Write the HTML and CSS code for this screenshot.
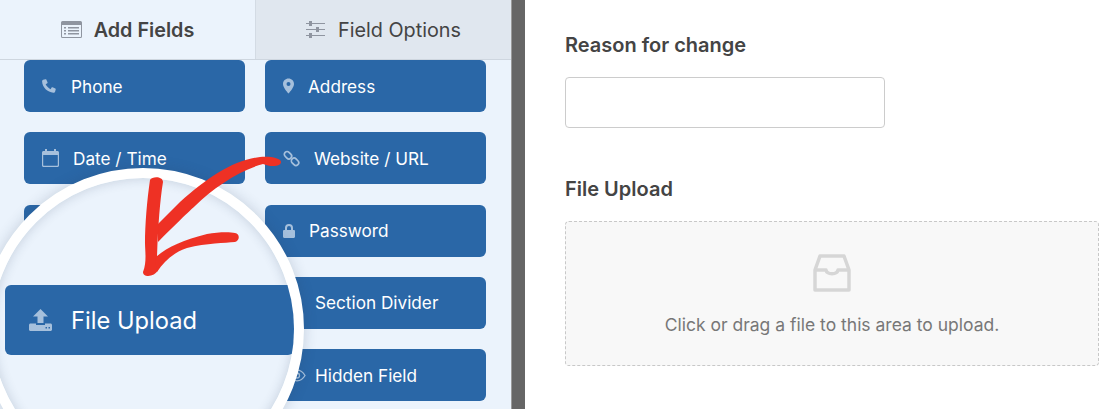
FILE: index.html
```html
<!DOCTYPE html>
<html lang="en">
<head>
    <meta charset="UTF-8">
    <meta name="viewport" content="width=device-width, initial-scale=1.0">
    <title>Form Builder</title>
    <link rel="stylesheet" href="styles.css">
</head>
<body>

    <div class="page">
        <div class="builder">
            <div class="tabs">
                <div class="tab tab-active">
                    <svg class="tab-icon" width="21" height="17" viewBox="0 0 21 17"><path fill="#8f95a0" fill-rule="evenodd" d="M1.500 0h18A1.500 1.500 0 0 1 21 1.500v14a1.500 1.500 0 0 1-1.500 1.500h-18A1.500 1.500 0 0 1 0 15.500v-14A1.500 1.500 0 0 1 1.500 0zM1 4v11.500c0 .3.200.5.500.5h18c.3 0 .5-.2.500-.5V4zM3 6h2v1.500H3zm4 0h11v1.500H7zM3 9h2v1.500H3zm4 0h11v1.500H7zm-4 3h2v1.500H3zm4 0h11v1.500H7z"/></svg>
                    <span>Add Fields</span>
                </div>
                <div class="tab">
                    <svg class="tab-icon" width="19" height="17" viewBox="0 0 19 17"><path fill="#8f95a0" d="M0 2h3V0h3v2h13v1H6v2H3V3H0zm0 6h10V6h3v2h6v1h-6v2h-3V9H0zm0 6h3v-2h3v2h13v1H6v2H3v-2H0z"/></svg>
                    <span>Field Options</span>
                </div>
            </div>

            <!-- field buttons -->
            <div class="field-grid">
                <div class="field-btn">
                    <svg class="field-icon icon-phone" width="14" height="14" viewBox="0 0 15 15"><path d="M3.600.2 1.300.9C.5 1.200 0 1.900.1 2.800c.4 6.200 5.800 11.600 12 12 .9.100 1.600-.4 1.900-1.200l.7-2.300c.1-.4 0-.8-.4-1l-3-1.400c-.4-.2-.8-.1-1 .2L9.200 11C7 9.900 5 7.900 3.900 5.700l1.800-1.100c.3-.2.400-.6.200-1L4.600.6C4.400.2 4 .1 3.600.2z"/></svg>
                    <span>Phone</span>
                </div>
                <div class="field-btn">
                    <svg class="field-icon icon-pin" width="11" height="16" viewBox="0 0 11 15"><path fill-rule="evenodd" d="M5.500 0C2.500 0 0 2.400 0 5.400 0 8.500 3.600 12.800 5.500 15c1.900-2.200 5.500-6.500 5.500-9.600C11 2.400 8.500 0 5.500 0zm0 3.500a2 2 0 1 1 0 4 2 2 0 0 1 0-4z"/></svg>
                    <span>Address</span>
                </div>
                <div class="field-btn">
                    <svg class="field-icon icon-cal" width="17" height="18" viewBox="0 0 17 18"><path fill-rule="evenodd" d="M3 0h2v2h7V0h2v2h1.500C16.300 2 17 2.700 17 3.500v13c0 .8-.7 1.500-1.500 1.500h-14C.7 18 0 17.300 0 16.500v-13C0 2.700.7 2 1.500 2H3zM1.200 6v10.300c0 .3.200.5.500.5h13.600c.3 0 .5-.2.500-.5V6z"/></svg>
                    <span>Date / Time</span>
                </div>
                <div class="field-btn">
                    <svg class="field-icon icon-link" width="17" height="17" viewBox="0 0 17 17"><g fill="none" stroke="#a6c0dc" stroke-width="1.700"><rect x="1" y="2.500" width="8" height="5.500" rx="2.700" transform="rotate(45 5 5.200)"/><rect x="8" y="9" width="8" height="5.500" rx="2.700" transform="rotate(45 12 11.800)"/></g></svg>
                    <span>Website / URL</span>
                </div>
                <div class="field-btn"></div>
                <div class="field-btn">
                    <svg class="field-icon icon-lock" width="12" height="14" viewBox="0 0 12 14"><path fill-rule="evenodd" d="M2 6V4a4 4 0 0 1 8 0v2h.8c.7 0 1.200.5 1.200 1.200v5.600c0 .7-.5 1.200-1.200 1.200H1.200C.5 14 0 13.500 0 12.800V7.200C0 6.500.5 6 1.200 6zm2 0h4V4a2 2 0 0 0-4 0z"/></svg>
                    <span>Password</span>
                </div>
                <div class="field-btn"></div>
                <div class="field-btn field-btn-wide">
                    <span>Section Divider</span>
                </div>
                <div class="field-btn"></div>
                <div class="field-btn field-btn-wide">
                    <svg class="field-icon icon-eye" width="18" height="13" viewBox="0 0 18 13"><path fill="none" stroke="#a6c0dc" stroke-width="1.300" d="M1 6.500C3 3 6 1.200 9 1.200s6 1.800 8 5.300c-2 3.500-5 5.300-8 5.300S3 10 1 6.500z"/><circle cx="9" cy="6.500" r="2.500" fill="none" stroke="#a6c0dc" stroke-width="1.300"/></svg>
                    <span>Hidden Field</span>
                </div>
            </div>

            <!-- magnified button -->
            <div class="lens">
                <div class="lens-btn">
                    <svg class="lens-icon" width="23" height="22" viewBox="0 0 23 22"><path fill="#a6c0dc" fill-rule="evenodd" d="M11.500 0 19 7.500h-4.500V14h-6V7.500H4zM1.500 14.500H7v1.500h9v-1.500h5.500c.8 0 1.500.7 1.500 1.500v4.500c0 .8-.7 1.500-1.500 1.500h-20C.7 22 0 21.300 0 20.500V16c0-.8.700-1.500 1.500-1.500zM16.500 18v1.500H18V18zm3 0v1.500H21V18z"/></svg>
                    <span>File Upload</span>
                </div>
            </div>

            <svg class="arrow" width="150" height="130" viewBox="140 152 150 130">
                <path fill="#ee3124" d="M281 162C281 158 270 156 260 157C233 160 207 178 180 202L158 224L158 242C170 230 187 213 195 206C213 188 240 170 263 164C270 167 281 167 281 162Z"/>
                <path fill="#ee3124" d="M150 180C152 176 163 176 163 182C160 200 158 227 157 257L158 270C155 277 143 278 143 272C147 262 145 250 145 243C145 225 147 200 150 180Z"/>
                <path fill="#ee3124" d="M155 258C165 248 183 240 207 234C218 232 230 232 235 233C240 234 240 240 235 242C225 243 207 243 187 248C175 252 165 260 157 272Z"/>
            </svg>
        </div>

        <div class="divider"></div>

        <div class="preview">
            <label class="field-label label-reason">Reason for change</label>
            <input class="text-input" type="text">
            <label class="field-label label-upload">File Upload</label>
            <div class="dropzone">
                <svg class="inbox" width="38" height="38" viewBox="0 0 38 38"><g fill="none" stroke="#d6d6d6" stroke-width="3.500" stroke-linejoin="round"><path d="M2 16 7 2h24l5 14v20H2z"/><path d="M2 16h11c1 5 11 5 12 0h11"/></g></svg>
                <p class="dropzone-text">Click or drag a file to this area to upload.</p>
            </div>
        </div>
    </div>

</body>
</html>
```

FILE: styles.css
```css
html, body {
    margin: 0;
    height: 100%;
    overflow: hidden;
}

body {
    font-family: 'Inter', 'Liberation Sans', sans-serif;
    background: white;
}

.page {
    display: flex;
    height: 409px;
}

.builder {
    position: relative;
    width: 511px;
    height: 409px;
    background: #ebf3fc;
    overflow: hidden;
    flex-shrink: 0;
}

.divider {
    width: 13px;
    background: #666666;
    border-left: 1px solid #9a9a9a;
    flex-shrink: 0;
}

.tabs {
    display: flex;
    height: 60px;
    box-sizing: border-box;
    border-bottom: 1px solid #ced6df;
}

.tab {
    flex: 1;
    display: flex;
    align-items: center;
    justify-content: center;
    gap: 13px;
    font-size: 19.800px;
    color: #444;
    background: #e0e7ef;
    border-left: 1px solid #d3dbe4;
}

.tab-active {
    flex: 0 0 255px;
    gap: 12px;
    font-weight: 600;
    background: #ebf3fc;
    border-left: none;
}

.field-grid {
    display: grid;
    grid-template-columns: 221px 221px;
    grid-auto-rows: 52px;
    column-gap: 20px;
    row-gap: 20.250px;
    padding-left: 24px;
}

.field-btn {
    display: flex;
    align-items: center;
    padding-left: 18px;
    border-radius: 6px;
    background: #2a67a7;
    color: white;
    font-size: 17.200px;
}

.field-btn-wide {
    padding-left: 50px;
}

.field-icon {
    fill: #a6c0dc;
    flex-shrink: 0;
}

.icon-phone { margin-right: 15px; }
.icon-pin { margin-right: 14px; }
.icon-cal { margin-right: 14px; }
.icon-link { margin-right: 14px; }
.icon-lock { margin-right: 14px; }

.icon-eye {
    margin-left: -27px;
    margin-right: 9px;
}

.lens {
    position: absolute;
    left: -18px;
    top: 168px;
    width: 302px;
    height: 302px;
    border: 10px solid white;
    border-radius: 50%;
    background: #ebf3fc;
    box-shadow: inset 0 0 12px rgba(40, 60, 90, 0.2), 0 0 14px rgba(40, 60, 90, 0.2);
    overflow: hidden;
    z-index: 1;
}

.lens-btn {
    display: flex;
    align-items: center;
    height: 70px;
    margin-top: 107px;
    margin-left: 13px;
    padding-left: 24px;
    border-radius: 6px;
    background: #2a67a7;
    color: white;
    font-size: 23.700px;
}

.lens-icon {
    flex-shrink: 0;
    margin-right: 19px;
}

.arrow {
    position: absolute;
    left: 140px;
    top: 152px;
    z-index: 2;
}

.preview {
    flex: 1;
    display: flex;
    flex-direction: column;
    align-items: flex-start;
    padding-left: 40px;
}

.field-label {
    font-size: 20px;
    font-weight: 600;
    color: #444;
    line-height: 24px;
}

.label-reason { margin-top: 33px; }
.label-upload { margin-top: 49px; }

.text-input {
    width: 320px;
    height: 51px;
    box-sizing: border-box;
    margin-top: 20px;
    border: 1px solid #cccccc;
    border-radius: 4px;
    background: white;
}

.dropzone {
    width: 534px;
    height: 145px;
    box-sizing: border-box;
    margin-top: 20px;
    border: 1px dashed #c8c8c8;
    border-radius: 4px;
    background: #f8f8f8;
    display: flex;
    flex-direction: column;
    align-items: center;
}

.inbox {
    margin-top: 32px;
}

.dropzone-text {
    margin: 22px 0 0;
    font-size: 17.500px;
    color: #777;
}
```
